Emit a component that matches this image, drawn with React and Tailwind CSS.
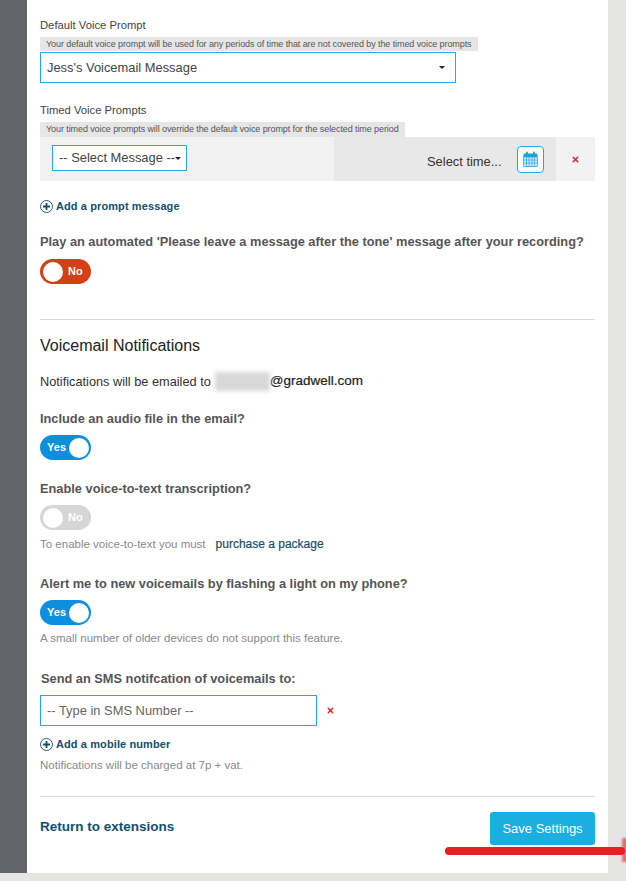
import { X } from "lucide-react";

const Toggle = ({ on, disabled }) => {
  const bg = disabled ? "bg-[#d6d6d6]" : on ? "bg-[#0e8fdd]" : "bg-[#d33f17]";
  return (
    <div className={`flex items-center w-[51px] h-[25px] rounded-full ${bg} ${on ? "justify-end pr-[2px]" : "pl-[3px]"}`}>
      {on && <span className="mr-[3px] text-[11px] font-bold text-white">Yes</span>}
      <span className="w-[20px] h-[20px] rounded-full bg-white" />
      {!on && <span className="ml-[5px] text-[11px] font-bold text-white">No</span>}
    </div>
  );
};

const Caret = () => (
  <span className="w-0 h-0 border-x-[3px] border-t-[3px] border-x-transparent border-t-[#222]" />
);

const PlusLink = ({ children }) => (
  <div className="flex items-center gap-[3px] h-[14px] text-[11px] font-bold text-[#134f6f] tracking-[0.1px]">
    <svg width="13" height="13" viewBox="0 0 13 13" fill="none">
      <circle cx="6.5" cy="6.5" r="6" stroke="#134f6f" strokeWidth="0.9" />
      <path d="M6.5 3v7M3 6.5h7" stroke="#134f6f" strokeWidth="1.8" />
    </svg>
    {children}
  </div>
);

const CalendarIcon = () => (
  <svg width="15" height="16" viewBox="0 0 15 16" fill="none">
    <path d="M0.5 3.5a1 1 0 0 1 1-1h12a1 1 0 0 1 1 1v3h-14z" fill="#1aa3dc" />
    <rect x="3" y="0.5" width="2" height="4" rx="1" fill="#1aa3dc" />
    <rect x="10" y="0.5" width="2" height="4" rx="1" fill="#1aa3dc" />
    <rect x="0.5" y="6" width="14" height="9.5" fill="#cfe9f6" stroke="#1aa3dc" strokeWidth="0.7" />
    <path d="M3.5 6v9.5M6 6v9.5M9 6v9.5M11.5 6v9.5M0.5 9h14M0.5 12h14" stroke="#1aa3dc" strokeWidth="0.6" />
  </svg>
);

const Question = ({ children, className = "" }) => (
  <p className={`text-[12.8px] leading-[18px] font-bold text-[#555558] whitespace-nowrap ${className}`}>{children}</p>
);

const Note = ({ children, className = "" }) => (
  <p className={`text-[11.5px] leading-[14px] text-[#8a8a8a] ${className}`}>{children}</p>
);

export default function App() {
  return (
    <div className="relative h-[881px] w-[626px] overflow-hidden bg-[#e5e5e3] font-['Liberation_Sans',Arial,sans-serif]">
      <div className="flex h-[873px]">
        <div className="w-[27px] bg-[#62666a]" />
        <div className="w-[581px] bg-white px-[13px] pt-[18px]">
          <p className="text-[11.25px] leading-[14px] text-[#444]">Default Voice Prompt</p>
          <p className="mt-[5px] w-[438px] h-[14px] bg-[#e6e6e6] pl-[6px] text-[9px] leading-[14px] tracking-[-0.09px] text-[#555] whitespace-nowrap">
            Your default voice prompt will be used for any periods of time that are not covered by the timed voice prompts
          </p>
          <div className="mt-[1px] flex items-center justify-between w-[416px] h-[31px] border border-[#1aaee5] pl-[6px] pr-[10px] text-[12.9px] text-[#444]">
            Jess's Voicemail Message
            <Caret />
          </div>

          <p className="mt-[20px] text-[11.25px] leading-[14px] text-[#444]">Timed Voice Prompts</p>
          <p className="mt-[5px] w-[365px] h-[15px] bg-[#e6e6e6] pl-[6px] text-[9px] leading-[15px] tracking-[-0.09px] text-[#555] whitespace-nowrap">
            Your timed voice prompts will override the default voice prompt for the selected time period
          </p>
          <div className="flex h-[44px] bg-[#f2f2f2]">
            <div className="w-[294px] pl-[12px] pt-[8px]">
              <div className="flex items-center w-[135px] h-[26px] border border-[#1aaee5] bg-white pl-[6px] text-[12.9px] text-[#444] whitespace-nowrap">
                -- Select Message --
                <Caret />
              </div>
            </div>
            <div className="flex items-center w-[222px] bg-[#e8e8e8] pl-[93px]">
              <span className="w-[90px] pt-[6px] text-[12.9px] text-[#333] whitespace-nowrap">Select time...</span>
              <div className="flex items-center justify-center w-[27px] h-[27px] rounded-[4px] border border-[#1aaee5] bg-white">
                <CalendarIcon />
              </div>
            </div>
            <div className="flex flex-1 items-center justify-center">
              <X size={9} strokeWidth={4} className="text-[#d8232a]" />
            </div>
          </div>

          <div className="mt-[18px]"><PlusLink>Add a prompt message</PlusLink></div>

          <Question className="mt-[20px]">Play an automated 'Please leave a message after the tone' message after your recording?</Question>
          <div className="mt-[8px]"><Toggle /></div>

          <div className="mt-[35px] h-px bg-[#dcdcdc]" />

          <h2 className="mt-[16px] text-[16px] leading-[20px] text-[#222]">Voicemail Notifications</h2>

          <div className="mt-[16px] flex items-center h-[19px] text-[12.75px] text-[#333]">
            Notifications will be emailed to
            <span className="ml-[4px] w-[55px] h-[19px] bg-[#d8d8d8] blur-[2px]" />
            <span className="text-[13.5px] font-medium text-[#222] [-webkit-text-stroke:0.2px_#222]">@gradwell.com</span>
          </div>

          <Question className="mt-[19px]">Include an audio file in the email?</Question>
          <div className="mt-[7px]"><Toggle on /></div>

          <Question className="mt-[20px]">Enable voice-to-text transcription?</Question>
          <div className="mt-[7px]"><Toggle disabled /></div>
          <div className="mt-[7px] flex items-center">
            <Note>To enable voice-to-text you must</Note>
            <span className="ml-[10px] text-[12px] leading-[14px] font-medium text-[#134f6f] [-webkit-text-stroke:0.2px_#134f6f]">purchase a package</span>
          </div>

          <Question className="mt-[24px]">Alert me to new voicemails by flashing a light on my phone?</Question>
          <div className="mt-[7px]"><Toggle on /></div>
          <Note className="mt-[6px]">A small number of older devices do not support this feature.</Note>

          <Question className="mt-[25px] ml-px">Send an SMS notifcation of voicemails to:</Question>
          <div className="mt-[7px] flex items-center">
            <div className="flex items-center w-[277px] h-[31px] border border-[#1aaee5] pl-[6px] text-[12.9px] text-[#666]">
              -- Type in SMS Number --
            </div>
            <X size={9} strokeWidth={4} className="ml-[9px] text-[#d8232a]" />
          </div>

          <div className="mt-[11px]"><PlusLink>Add a mobile number</PlusLink></div>
          <Note className="mt-[7px]">Notifications will be charged at 7p + vat.</Note>

          <div className="mt-[24px] h-px bg-[#dcdcdc]" />

          <div className="mt-[15px] flex items-start justify-between">
            <span className="mt-[6px] text-[13.5px] leading-[18px] font-bold text-[#134f6f]">Return to extensions</span>
            <button className="w-[105px] h-[33px] rounded-[3px] bg-[#1aaee2] text-[13px] text-white">Save Settings</button>
          </div>
        </div>
      </div>

      {/* red annotation line drawn on top of the screenshot */}
      <div className="absolute left-[445px] top-[847px] w-[180px] h-[8px] rounded-full bg-[#ea1c24]" />
      <div className="absolute left-[622px] top-[838px] w-[6px] h-[24px] bg-[#ea1c24] opacity-60 blur-[1px]" />
    </div>
  );
}
